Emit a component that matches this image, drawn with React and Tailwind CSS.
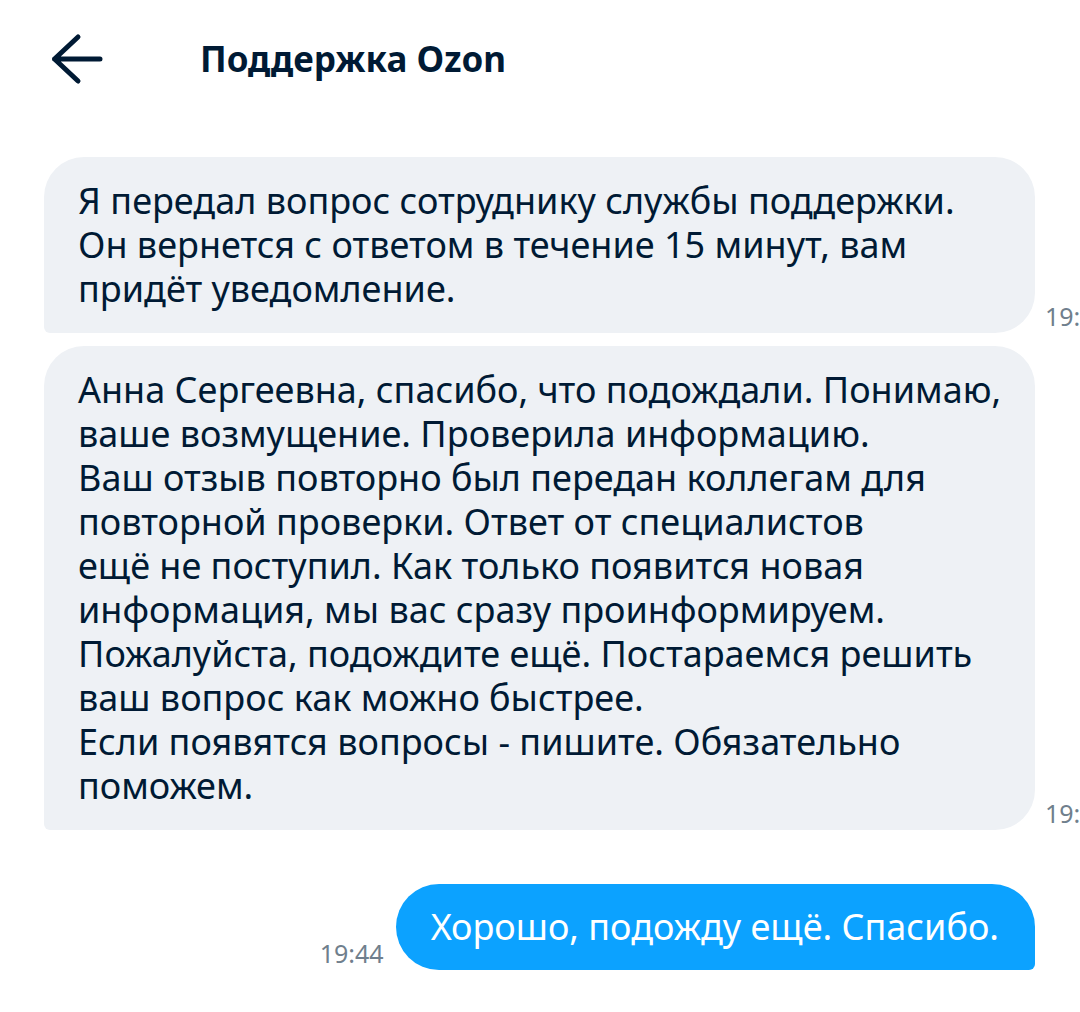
const font = { fontFamily: '"Noto Sans", "Open Sans", sans-serif' };

const first = [
  'Я передал вопрос сотруднику службы поддержки.',
  'Он вернется с ответом в течение 15 минут, вам',
  'придёт уведомление.',
];

const second = [
  'Анна Сергеевна, спасибо, что подождали. Понимаю,',
  'ваше возмущение. Проверила информацию.',
  'Ваш отзыв повторно был передан коллегам для',
  'повторной проверки. Ответ от специалистов',
  'ещё не поступил. Как только появится новая',
  'информация, мы вас сразу проинформируем.',
  'Пожалуйста, подождите ещё. Постараемся решить',
  'ваш вопрос как можно быстрее.',
  'Если появятся вопросы - пишите. Обязательно',
  'поможем.',
];

function Incoming({ lines, time }) {
  return (
    <div className="flex items-end">
      <div className="w-[991px] shrink-0 rounded-[40px] rounded-bl-[6px] bg-[#eef1f5] py-[22px] pl-[34px] pr-[30px] text-[36px] leading-[44px] text-[#001a34]">
        {lines.map((l, i) => (
          <div key={i} className="whitespace-nowrap">{l}</div>
        ))}
      </div>
      <span className="ml-[10px] mb-[2px] shrink-0 text-[25px] leading-[30px] text-[#707f8d]">{time}</span>
    </div>
  );
}

export default function App() {
  return (
    <div className="w-full min-h-screen overflow-hidden bg-white" style={font}>
      <div className="flex h-[118px] items-center">
        <svg className="ml-[50px] h-[54px] w-[54px] shrink-0" viewBox="0 0 54 54" fill="none" stroke="#001a34" strokeWidth="5" strokeLinecap="round" strokeLinejoin="round">
          <path d="M4.5 27H50M28 5L4.5 27L28 49" />
        </svg>
        <h1 className="ml-[96px] text-[35px] font-bold leading-[40px] text-[#001a34]">Поддержка Ozon</h1>
      </div>

      <div className="mt-[39px] flex flex-col gap-[13px] pl-[44px]">
        <Incoming lines={first} time="19:14" />
        <Incoming lines={second} time="19:43" />
      </div>

      <div className="mt-[54px] flex items-end justify-end pr-[45px]">
        <span className="mr-[12px] mb-[2px] text-[25px] leading-[30px] text-[#707f8d]">19:44</span>
        <div className="rounded-[43px] rounded-br-[6px] bg-[#0ca2ff] py-[21px] pl-[35px] pr-[36px] text-[36px] leading-[44px] text-white whitespace-nowrap">
          Хорошо, подожду ещё. Спасибо.
        </div>
      </div>
    </div>
  );
}
